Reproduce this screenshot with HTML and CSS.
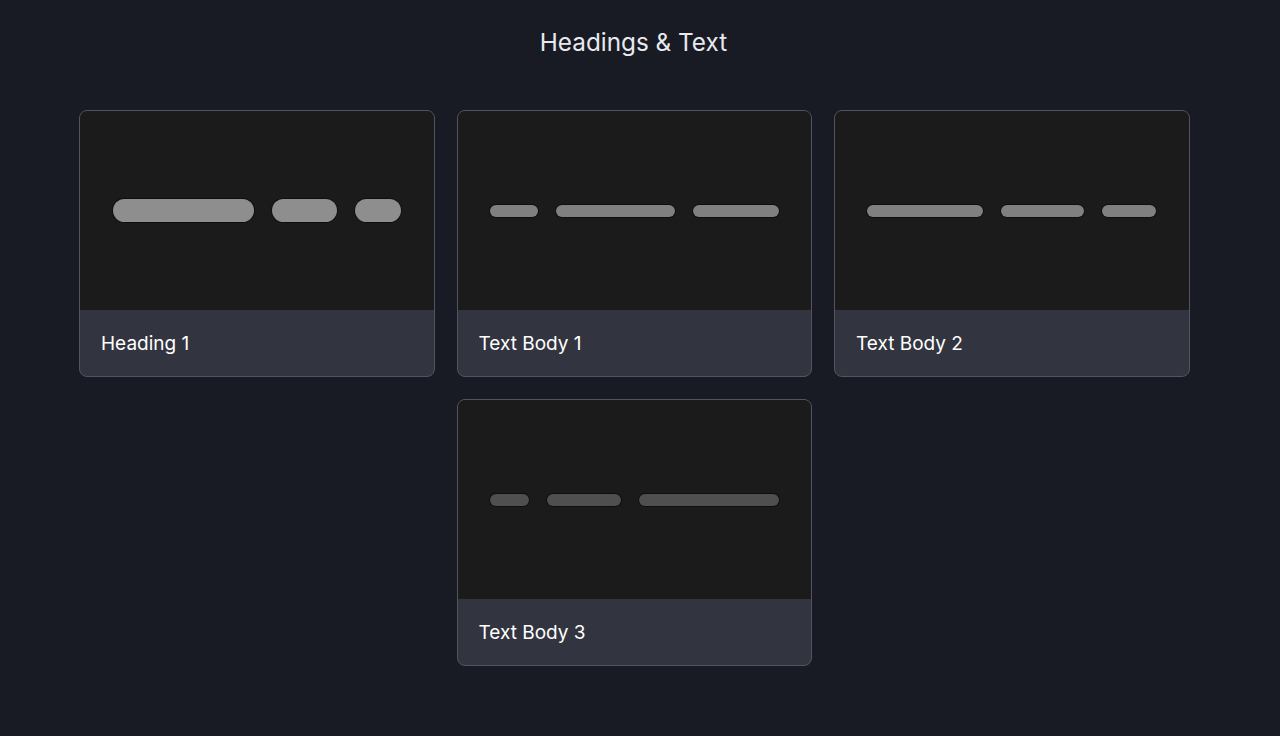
FILE: index.html
```html
<!DOCTYPE html>
<html>
<head>
<meta charset="utf-8">
<link rel="stylesheet" href="styles.css">
</head>
<body>
<main class="page">
  <h1 class="title">Headings &amp; Text</h1>
  <div class="grid">
    <div class="card">
      <div class="preview">
        <span class="pill h1" style="width:141px"></span>
        <span class="pill h1" style="width:65px"></span>
        <span class="pill h1" style="width:46px"></span>
      </div>
      <div class="label">Heading 1</div>
    </div>
    <div class="card">
      <div class="preview">
        <span class="pill b1" style="width:48px"></span>
        <span class="pill b1" style="width:119px"></span>
        <span class="pill b1" style="width:86px"></span>
      </div>
      <div class="label">Text Body 1</div>
    </div>
    <div class="card">
      <div class="preview">
        <span class="pill b1" style="width:116px"></span>
        <span class="pill b1" style="width:83px"></span>
        <span class="pill b1" style="width:54px"></span>
      </div>
      <div class="label">Text Body 2</div>
    </div>
    <div class="card col2">
      <div class="preview">
        <span class="pill b3" style="width:39px"></span>
        <span class="pill b3" style="width:74px"></span>
        <span class="pill b3" style="width:140px"></span>
      </div>
      <div class="label">Text Body 3</div>
    </div>
  </div>
</main>
</body>
</html>
```
FILE: styles.css
```css
html, body {
  margin: 0;
  padding: 0;
  background: #181b24;
}
body {
  font-family: Inter, "Noto Sans", sans-serif;
  color: #e5e7eb;
}
.page {
  width: 1280px;
  height: 736px;
  box-sizing: border-box;
  padding-top: 26px;
}
.title {
  margin: 0;
  text-align: center;
  font-size: 24.3px;
  font-weight: 400;
  line-height: 32px;
  color: #e8e9ee;
  padding-right: 13px;
}
.grid {
  margin-top: 52px;
  margin-left: 79px;
  display: grid;
  grid-template-columns: repeat(3, 355.5px);
  column-gap: 22px;
  row-gap: 22px;
}
.col2 {
  grid-column: 2;
}
.card {
  height: 267px;
  box-sizing: border-box;
  border: 1px solid #52555f;
  border-radius: 8px;
  overflow: hidden;
  display: flex;
  flex-direction: column;
  background: #323540;
}
.preview {
  height: 199px;
  background: #1b1b1b;
  display: flex;
  align-items: center;
  justify-content: center;
  gap: 18px;
}
.pill {
  display: block;
  border-radius: 999px;
  box-shadow: 0 0 0 1px rgba(0,0,0,0.45);
}
.pill.h1 {
  height: 23px;
  background: #8e8e8e;
}
.pill.b1 {
  height: 12px;
  background: #808080;
}
.pill.b3 {
  height: 12px;
  background: #4f4f4f;
}
.label {
  flex: 1;
  display: flex;
  align-items: center;
  padding-left: 21px;
  font-size: 19px;
  color: #ffffff;
  padding-top: 1px;
}
```
